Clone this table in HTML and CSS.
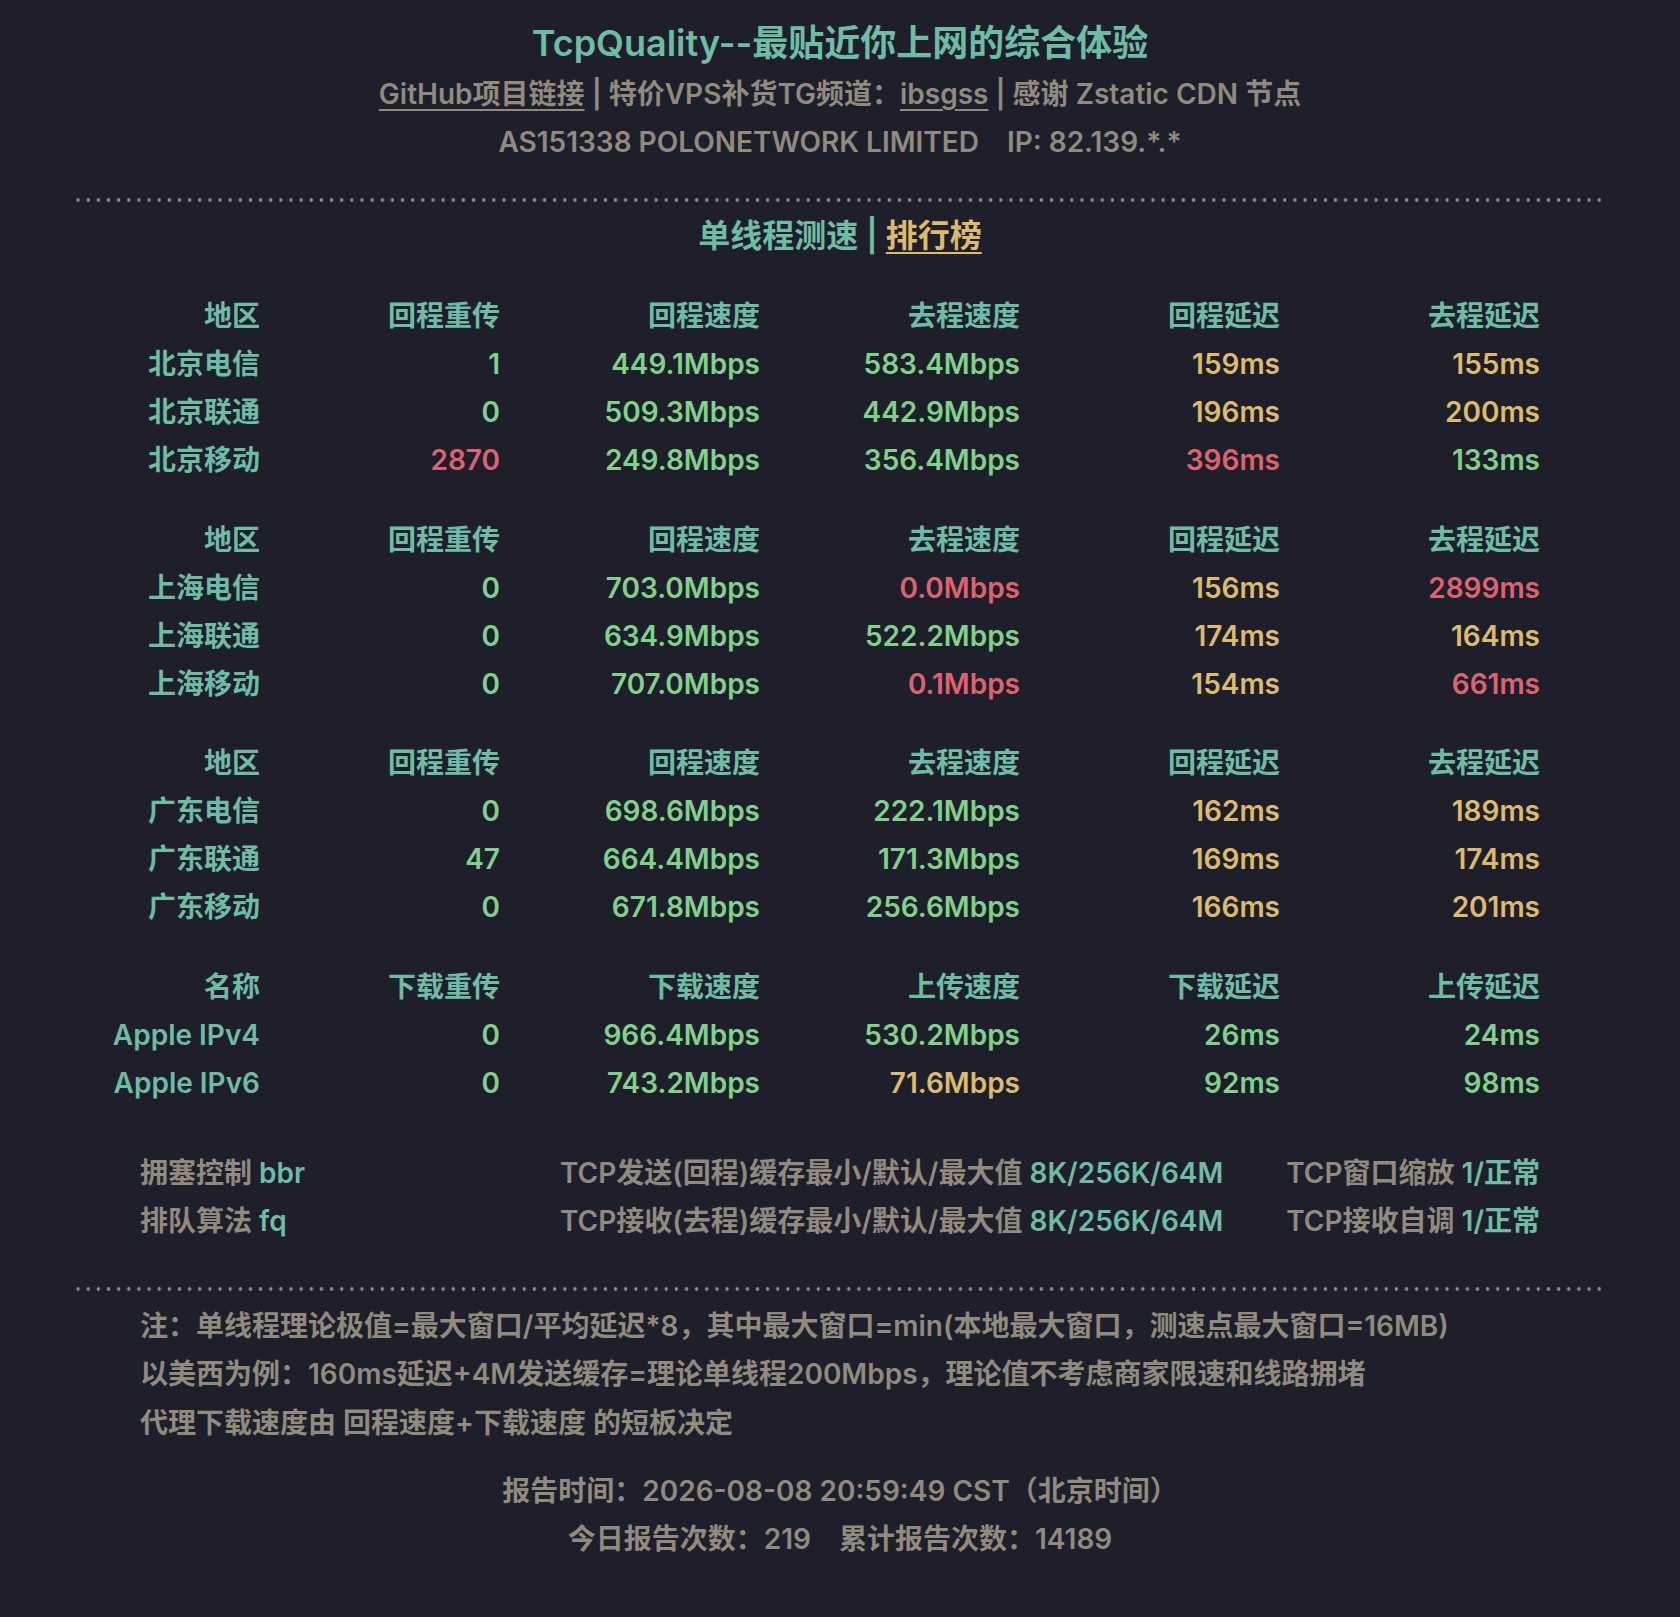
FILE: index.html
```html
<!DOCTYPE html>
<html lang="zh-CN">
<head>
<meta charset="utf-8">
<title>TcpQuality</title>
<link rel="stylesheet" href="styles.css">
</head>
<body>
<div class="page">
  <h1 class="title">TcpQuality--最贴近你上网的综合体验</h1>
  <div class="line gray"><a class="link" href="#">GitHub项目链接</a> | 特价VPS补货TG频道：<a class="link" href="#">ibsgss</a> | 感谢 Zstatic CDN 节点</div>
  <div class="line gray">AS151338 POLONETWORK LIMITED<span class="gap"></span>IP: 82.139.*.*</div>

  <div class="dots"></div>

  <div class="sub"><span class="teal">单线程测速</span> <span class="teal">|</span> <a class="rank" href="#">排行榜</a></div>

  <div class="tgroup first">
    <div class="h">地区</div><div class="h">回程重传</div><div class="h">回程速度</div><div class="h">去程速度</div><div class="h">回程延迟</div><div class="h">去程延迟</div>
    <div class="h">北京电信</div><div class="g">1</div><div class="g">449.1Mbps</div><div class="g">583.4Mbps</div><div class="y">159ms</div><div class="y">155ms</div>
    <div class="h">北京联通</div><div class="g">0</div><div class="g">509.3Mbps</div><div class="g">442.9Mbps</div><div class="y">196ms</div><div class="y">200ms</div>
    <div class="h">北京移动</div><div class="r">2870</div><div class="g">249.8Mbps</div><div class="g">356.4Mbps</div><div class="r">396ms</div><div class="g">133ms</div>
  </div>

  <div class="tgroup">
    <div class="h">地区</div><div class="h">回程重传</div><div class="h">回程速度</div><div class="h">去程速度</div><div class="h">回程延迟</div><div class="h">去程延迟</div>
    <div class="h">上海电信</div><div class="g">0</div><div class="g">703.0Mbps</div><div class="r">0.0Mbps</div><div class="y">156ms</div><div class="r">2899ms</div>
    <div class="h">上海联通</div><div class="g">0</div><div class="g">634.9Mbps</div><div class="g">522.2Mbps</div><div class="y">174ms</div><div class="y">164ms</div>
    <div class="h">上海移动</div><div class="g">0</div><div class="g">707.0Mbps</div><div class="r">0.1Mbps</div><div class="y">154ms</div><div class="r">661ms</div>
  </div>

  <div class="tgroup">
    <div class="h">地区</div><div class="h">回程重传</div><div class="h">回程速度</div><div class="h">去程速度</div><div class="h">回程延迟</div><div class="h">去程延迟</div>
    <div class="h">广东电信</div><div class="g">0</div><div class="g">698.6Mbps</div><div class="g">222.1Mbps</div><div class="y">162ms</div><div class="y">189ms</div>
    <div class="h">广东联通</div><div class="g">47</div><div class="g">664.4Mbps</div><div class="g">171.3Mbps</div><div class="y">169ms</div><div class="y">174ms</div>
    <div class="h">广东移动</div><div class="g">0</div><div class="g">671.8Mbps</div><div class="g">256.6Mbps</div><div class="y">166ms</div><div class="y">201ms</div>
  </div>

  <div class="tgroup">
    <div class="h">名称</div><div class="h">下载重传</div><div class="h">下载速度</div><div class="h">上传速度</div><div class="h">下载延迟</div><div class="h">上传延迟</div>
    <div class="h">Apple IPv4</div><div class="g">0</div><div class="g">966.4Mbps</div><div class="g">530.2Mbps</div><div class="g">26ms</div><div class="g">24ms</div>
    <div class="h">Apple IPv6</div><div class="g">0</div><div class="g">743.2Mbps</div><div class="y">71.6Mbps</div><div class="g">92ms</div><div class="g">98ms</div>
  </div>

  <div class="sys gray">
    <div>拥塞控制 <span class="teal">bbr</span></div>
    <div>TCP发送(回程)缓存最小/默认/最大值 <span class="teal">8K/256K/64M</span></div>
    <div class="right">TCP窗口缩放 <span class="teal">1/正常</span></div>
    <div>排队算法 <span class="teal">fq</span></div>
    <div>TCP接收(去程)缓存最小/默认/最大值 <span class="teal">8K/256K/64M</span></div>
    <div class="right">TCP接收自调 <span class="teal">1/正常</span></div>
  </div>

  <div class="dots dots2"></div>

  <div class="notes gray">
    <div>注：单线程理论极值=最大窗口/平均延迟*8，其中最大窗口=min(本地最大窗口，测速点最大窗口=16MB)</div>
    <div>以美西为例：160ms延迟+4M发送缓存=理论单线程200Mbps，理论值不考虑商家限速和线路拥堵</div>
    <div>代理下载速度由 回程速度+下载速度 的短板决定</div>
  </div>

  <div class="report gray">
    <div>报告时间：2026-08-08 20:59:49 CST（北京时间）</div>
    <div>今日报告次数：219<span class="gap"></span>累计报告次数：14189</div>
  </div>
</div>
</body>
</html>
```

FILE: styles.css
```css
html, body {
  margin: 0;
  padding: 0;
  background: #1f1e2b;
}
body {
  font-family: Inter, "Noto Sans CJK SC", sans-serif;
  font-weight: 600;
  font-size: 28px;
  color: #918a7e;
}
.page {
  padding-top: 16px;
  padding-bottom: 54px;
}
.title {
  margin: 0;
  font-size: 36px;
  line-height: 54px;
  font-weight: 600;
  text-align: center;
  color: #6dbca4;
}
.line {
  text-align: center;
  line-height: 48px;
}
.gray { color: #918a7e; }
.teal { color: #6dbca4; }
.link {
  color: inherit;
  text-decoration: underline;
  text-decoration-thickness: 2px;
  text-underline-offset: 5px;
}
.gap {
  display: inline-block;
  width: 28px;
}
.dots {
  height: 4px;
  margin: 32px 73px 0;
  background-image: radial-gradient(circle, #8f897e 1.6px, transparent 2px);
  background-size: 10.15px 4px;
  background-repeat: repeat-x;
}
.sub {
  margin-top: 10px;
  text-align: center;
  font-size: 32px;
  line-height: 48px;
}
.rank {
  color: #dcbb6c;
  text-decoration: underline;
  text-decoration-thickness: 2px;
  text-underline-offset: 5px;
}
.tgroup {
  display: grid;
  grid-template-columns: 200px 240px 260px 260px 260px 260px;
  margin-left: 60px;
  margin-top: 31.5px;
  line-height: 48px;
  text-align: right;
}
.tgroup.first { margin-top: 32px; }
.h { color: #6dbca4; }
.g { color: #7fd28a; }
.y { color: #dcbb6c; }
.r { color: #df636e; }
.sys {
  display: grid;
  grid-template-columns: 420px 1fr auto;
  margin: 42.5px 140px 0 140px;
  line-height: 48px;
  width: 1400px;
}
.right { text-align: right; }
.dots2 { margin-top: 42px; }
.notes {
  margin: 11px 0 0 140px;
  line-height: 48.3px;
}
.report {
  margin-top: 20px;
  text-align: center;
  line-height: 48.5px;
}
```
